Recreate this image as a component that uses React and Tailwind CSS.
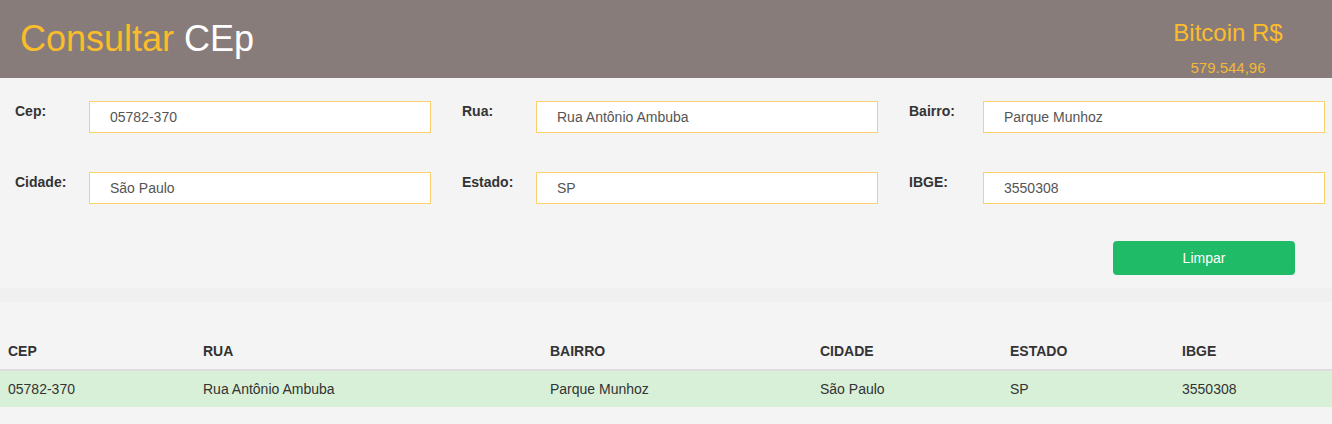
const font = { fontFamily: '"Liberation Sans", Arial, sans-serif' };

const FIELDS = [
  [
    { label: 'Cep:', value: '05782-370' },
    { label: 'Rua:', value: 'Rua Antônio Ambuba' },
    { label: 'Bairro:', value: 'Parque Munhoz' },
  ],
  [
    { label: 'Cidade:', value: 'São Paulo' },
    { label: 'Estado:', value: 'SP' },
    { label: 'IBGE:', value: '3550308' },
  ],
];

const COLUMNS = [
  { title: 'CEP', key: 'cep', width: 'w-[195px]' },
  { title: 'RUA', key: 'rua', width: 'w-[347px]' },
  { title: 'BAIRRO', key: 'bairro', width: 'w-[270px]' },
  { title: 'CIDADE', key: 'cidade', width: 'w-[190px]' },
  { title: 'ESTADO', key: 'estado', width: 'w-[172px]' },
  { title: 'IBGE', key: 'ibge', width: '' },
];

const ROWS = [
  {
    cep: '05782-370',
    rua: 'Rua Antônio Ambuba',
    bairro: 'Parque Munhoz',
    cidade: 'São Paulo',
    estado: 'SP',
    ibge: '3550308',
  },
];

function Field({ label, value }) {
  return (
    <div className="flex w-[447px] shrink-0 items-start pl-[15px]">
      <label className="w-[74px] shrink-0 text-[14px] font-bold leading-[20px] text-[#333]">
        {label}
      </label>
      <input
        type="text"
        defaultValue={value}
        className="h-[32px] w-[342px] border border-[#fcd06e] bg-white pl-[20px] text-[14px] text-[#555] outline-none"
        style={font}
      />
    </div>
  );
}

export default function App() {
  return (
    <div className="min-h-[424px] overflow-hidden bg-[#f4f4f4]" style={font}>
      {/* Header */}
      <header className="flex h-[78px] items-start justify-between bg-[#877c7a]">
        <h1 className="pl-[20px] pt-[21px] text-[36px] leading-[36px]">
          <span className="text-[#fbbc2c]">Consultar</span>{' '}
          <span className="text-white">CEp</span>
        </h1>
        <div className="mr-[24px] w-[160px] pt-[21px] text-center text-[#fbbc2c]">
          <div className="text-[24px] leading-[24px]">Bitcoin R$</div>
          <div className="mt-[15px] text-[15px] leading-[15px] text-[#f3b935]">579.544,96</div>
        </div>
      </header>

      {/* Form */}
      <section className="h-[210px] pt-[23px]">
        <div className="flex flex-col gap-[39px]">
          {FIELDS.map((row, i) => (
            <div key={i} className="flex">
              {row.map((f) => (
                <Field key={f.label} {...f} />
              ))}
            </div>
          ))}
        </div>
        <div className="mt-[37px] flex justify-end pr-[37px]">
          <button className="h-[34px] w-[182px] rounded-[4px] bg-[#1fbb66] text-[14px] text-white">
            Limpar
          </button>
        </div>
      </section>

      <div className="h-[14px] bg-[#f0f0f0]" />

      {/* Results */}
      <section className="pt-[31px]">
        <table className="w-full border-collapse text-left text-[14px] text-[#333]">
          <thead>
            <tr className="border-b-2 border-[#ddd]">
              {COLUMNS.map((c) => (
                <th key={c.key} className={`${c.width} p-[8px] font-bold leading-[20px]`}>
                  {c.title}
                </th>
              ))}
            </tr>
          </thead>
          <tbody>
            {ROWS.map((r, i) => (
              <tr key={i} className="bg-[#d9f0d8]">
                {COLUMNS.map((c) => (
                  <td key={c.key} className="p-[8px] leading-[20px]">
                    {r[c.key]}
                  </td>
                ))}
              </tr>
            ))}
          </tbody>
        </table>
      </section>
    </div>
  );
}
